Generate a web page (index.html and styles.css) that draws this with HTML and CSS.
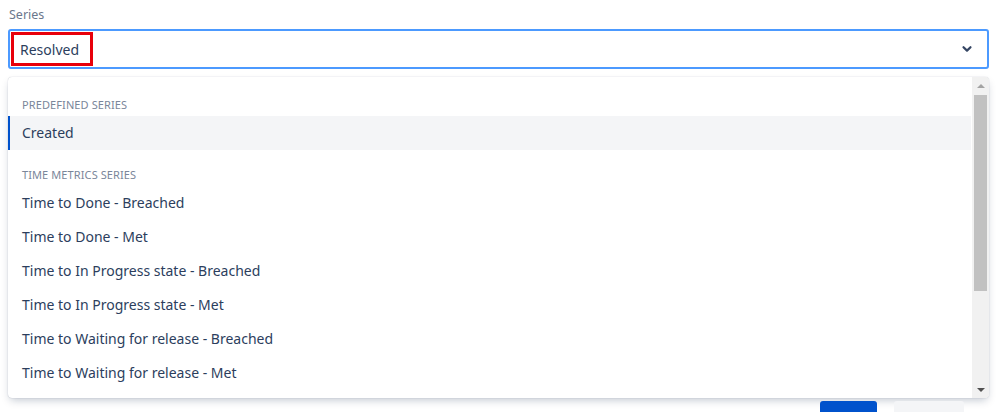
FILE: index.html
```html
<!DOCTYPE html>
<html>
<head>
<meta charset="utf-8">
<link rel="stylesheet" href="styles.css">
</head>
<body>
<div class="field">
  <div class="label">Series</div>
  <div class="select">
    <span class="value">Resolved</span>
    <svg class="chevron" width="12" height="12" viewBox="0 0 12 12"><path d="M2.5 4.2 L6 7.6 L9.5 4.2" fill="none" stroke="#344563" stroke-width="2.2" stroke-linecap="round" stroke-linejoin="round"/></svg>
  </div>
  <div class="menu">
    <div class="list">
      <div class="group">Predefined series</div>
      <div class="item selected">Created</div>
      <div class="group">Time metrics series</div>
      <div class="item">Time to Done - Breached</div>
      <div class="item">Time to Done - Met</div>
      <div class="item">Time to In Progress state - Breached</div>
      <div class="item">Time to In Progress state - Met</div>
      <div class="item">Time to Waiting for release - Breached</div>
      <div class="item">Time to Waiting for release - Met</div>
    </div>
    <div class="scrollbar">
      <div class="arrow up"></div>
      <div class="track"><div class="thumb"></div></div>
      <div class="arrow down"></div>
    </div>
  </div>
  <div class="buttons">
    <div class="btn primary"></div>
    <div class="btn secondary"></div>
  </div>
</div>
</body>
</html>
```
FILE: styles.css
```css
html, body {
  margin: 0;
  padding: 0;
  background: #ffffff;
  overflow: hidden;
}
body {
  width: 998px;
  height: 412px;
  font-family: "Noto Sans", "Open Sans", sans-serif;
  color: #253858;
}
.field {
  padding: 7px 9px 0 8px;
}
.label {
  font-size: 12.5px;
  line-height: 16px;
  color: #6b778c;
  padding-left: 1px;
  height: 16px;
}
.select {
  margin-top: 6px;
  height: 40px;
  box-sizing: border-box;
  border: 2px solid #4c9aff;
  border-radius: 3px;
  display: flex;
  align-items: center;
  justify-content: space-between;
  padding: 0 14px 0 1px;
}
.value {
  border: 3px solid #e8000b;
  font-size: 14px;
  line-height: 21px;
  padding: 4px 11px 3px 6px;
  color: #2c3e5d;
}
.chevron {
  display: block;
}
.menu {
  margin-top: 8px;
  height: 321px;
  border-radius: 4px;
  box-shadow: 0 4px 8px -2px rgba(9, 30, 66, 0.25), 0 0 1px rgba(9, 30, 66, 0.31);
  display: flex;
  overflow: hidden;
}
.list {
  flex: 1;
  overflow: hidden;
  padding-top: 3px;
}
.group {
  font-size: 11px;
  line-height: 16px;
  text-transform: uppercase;
  color: #7a869a;
  padding: 17px 14px 3px;
  letter-spacing: 0.1px;
}
.item {
  height: 34px;
  line-height: 34px;
  font-size: 14px;
  padding-left: 14px;
  color: #2c3e5d;
}
.item.selected {
  background: #f4f5f7;
  box-shadow: inset 2px 0 0 #0052cc;
}
.scrollbar {
  width: 17px;
  background: #f1f1f1;
  display: flex;
  flex-direction: column;
  border-left: 1px solid #ffffff;
}
.arrow {
  height: 17px;
  display: flex;
  align-items: center;
  justify-content: center;
}
.arrow::before {
  content: "";
  width: 0;
  height: 0;
  border-left: 4px solid transparent;
  border-right: 4px solid transparent;
}
.arrow.up::before {
  border-bottom: 4px solid #a3a3a3;
}
.arrow.down::before {
  border-top: 4px solid #505050;
}
.track {
  flex: 1;
  padding: 1px 2px;
}
.thumb {
  height: 196px;
  background: #c1c1c1;
}
.buttons {
  display: flex;
  justify-content: flex-end;
  gap: 17px;
  margin-top: 3px;
  padding-right: 25px;
}
.btn {
  height: 32px;
  border-radius: 3px;
}
.btn.primary {
  width: 57px;
  background: #0052cc;
}
.btn.secondary {
  width: 70px;
  background: #f4f5f7;
}
```
